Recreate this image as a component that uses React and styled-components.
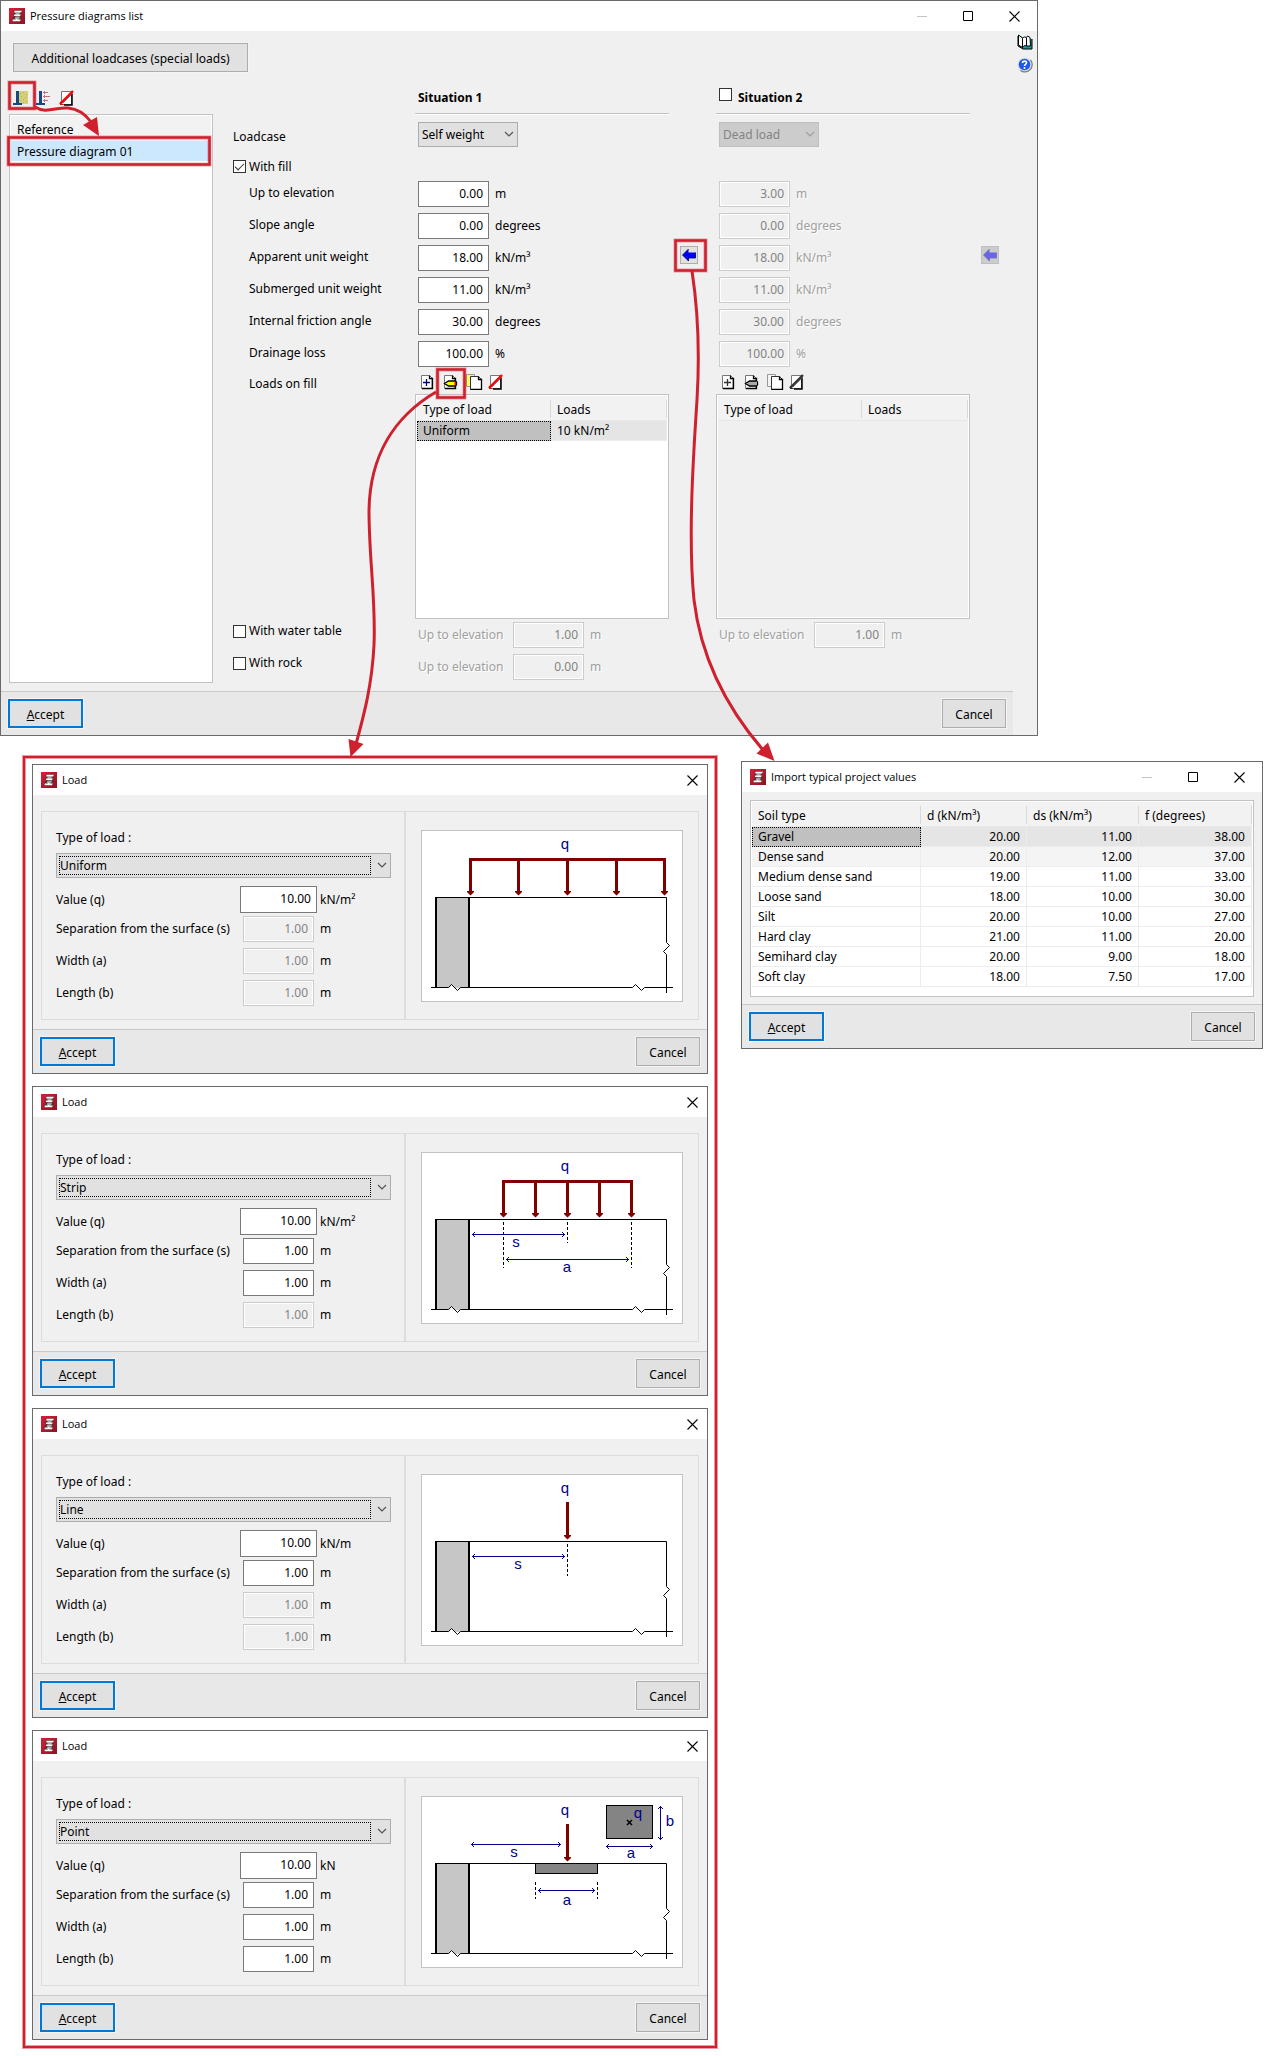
import React from "react";
import styled, { createGlobalStyle, css } from "styled-components";

const GlobalStyle = createGlobalStyle`
  *, *::before, *::after { box-sizing: border-box; }
  body {
    margin: 0;
    background: #ffffff;
    color: #000000;
    font-family: "Noto Sans", "Open Sans", sans-serif;
    font-size: 12px;
    line-height: 16px;
  }
  button, input, select { font: inherit; color: inherit; margin: 0; }
`;

const RED = "#cf202e";

/* ---------- page ---------- */

const Page = styled.main`
  position: relative;
  display: flex;
  flex-direction: column;
  gap: 20px;
  padding-bottom: 8px;
`;

const LowerRow = styled.div`
  display: flex;
  align-items: flex-start;
  gap: 24px;
  padding: 0 6px 0 23px;
`;

const LoadStack = styled.section`
  flex: 0 1 694px;
  display: flex;
  flex-direction: column;
  gap: 12px;
  padding: 6px 7px;
  border: 2px solid ${RED};
  box-shadow: 0 0 0 1px #ec9aa2, inset 0 0 0 1px #ec9aa2;
`;

const ImportSlot = styled.div`
  flex: 0 1 522px;
  padding-top: 5px;
`;

const Annotations = styled.svg`
  position: absolute;
  left: 0;
  top: 0;
  pointer-events: none;
  overflow: visible;
`;

/* ---------- window frame ---------- */

const Window = styled.section`
  display: flex;
  flex-direction: column;
  max-width: ${(p) => p.$max || "none"};
  border: 1px solid #6a6a6a;
  background: #f0f0f0;
`;

const TitleBar = styled.header`
  display: flex;
  align-items: center;
  gap: 5px;
  height: 30px;
  padding-left: 8px;
  background: #ffffff;
`;

const Title = styled.h1`
  flex: 1;
  margin: 0;
  font-family: "Open Sans", "Noto Sans", sans-serif;
  font-size: 11px;
  font-weight: 400;
`;

const ControlGroup = styled.div`
  display: flex;
`;

const WindowButton = styled.button`
  display: grid;
  place-items: center;
  width: ${(p) => (p.$narrow ? 30 : 46)}px;
  height: 28px;
  padding: 0;
  border: 0;
  background: none;
`;

const Footer = styled.footer`
  display: flex;
  justify-content: space-between;
  padding: 7px;
  border-top: 1px solid #c9c9c9;
  background: #e8e8e8;
`;

const Button = styled.button`
  min-width: ${(p) => p.$min || 64}px;
  height: 29px;
  padding: 2px 8px 0;
  border: 1px solid #adadad;
  background: #e1e1e1;
  box-shadow: 0 0 0 1px #f4f4f4;
  ${(p) =>
    p.$primary &&
    css`
      border: 2px solid #0078d7;
    `}
`;

/* ---------- form parts ---------- */

const Field = styled.input`
  width: ${(p) => (p.$wide ? 77 : 71)}px;
  height: ${(p) => (p.$wide ? 27 : 26)}px;
  padding: 0 5px 2px;
  border: 1px solid #7a7a7a;
  border-radius: 0;
  background: #ffffff;
  text-align: right;
  &:disabled {
    border-color: #cccccc;
    background: #f0f0f0;
    box-shadow: inset 0 0 0 1px #ffffff;
    color: #838383;
  }
`;

const SelectBox = styled.span`
  position: relative;
  display: block;
  width: ${(p) => p.$width};
  svg {
    position: absolute;
    right: 4px;
    top: 8px;
    pointer-events: none;
  }
  ${(p) =>
    p.$focused &&
    css`
      &::after {
        content: "";
        position: absolute;
        inset: 3px 20px 3px 3px;
        border: 1px dotted #000000;
        pointer-events: none;
      }
    `}
`;

const SelectControl = styled.select`
  appearance: none;
  display: block;
  width: 100%;
  height: 25px;
  padding: 1px 18px 0 3px;
  border: 1px solid #adadad;
  border-radius: 0;
  background: #e1e1e1;
  &:disabled {
    border-color: #bfbfbf;
    background: #cccccc;
    color: #838383;
    opacity: 1;
  }
`;

const Tick = styled.input`
  appearance: none;
  flex: none;
  display: grid;
  place-items: center;
  width: 13px;
  height: 13px;
  border: 1px solid #333333;
  background: #ffffff;
  &:checked::after {
    content: "";
    width: 9px;
    height: 5px;
    margin-top: -3px;
    border: solid #333333;
    border-width: 0 0 1px 1px;
    rotate: -45deg;
  }
`;

const Unit = styled.span`
  padding-left: 6px;
  ${(p) =>
    p.$off &&
    css`
      color: #a0a0a0;
      text-shadow: 1px 1px 0 #ffffff;
    `}
`;

const ElevationLabel = styled.label`
  width: 95px;
  color: #a0a0a0;
  text-shadow: 1px 1px 0 #ffffff;
`;

/* ---------- pressure diagrams window ---------- */

const Split = styled.div`
  display: grid;
  grid-template-columns: 1fr 24px;
`;

const Rail = styled.nav`
  display: flex;
  flex-direction: column;
  align-items: center;
  gap: 7px;
  padding-top: 3px;
`;

const IconButton = styled.button`
  display: grid;
  place-items: center;
  width: 16px;
  height: 16px;
  padding: 0;
  border: 0;
  background: none;
`;

const Content = styled.div`
  padding: 12px 0 8px 8px;
`;

const TopBar = styled.div`
  padding: 0 4px 10px;
`;

const Columns = styled.div`
  display: grid;
  grid-template-columns: 204px 202px 254px 47px 254px 1fr;
`;

const Column = styled.div`
  display: flex;
  flex-direction: column;
  padding-left: ${(p) => p.$indent || 0}px;
`;

const Row = styled.div`
  display: flex;
  align-items: center;
  flex: none;
  height: ${(p) => p.$h || 32}px;
  gap: ${(p) => p.$gap || 0}px;
  padding-left: ${(p) => p.$pad || 0}px;
  padding-top: ${(p) => p.$drop || 0}px;
  padding-bottom: ${(p) => p.$lift || 0}px;
`;

const SituationHead = styled(Row)`
  padding-left: 3px;
  border-bottom: 1px solid #c2c2c2;
  box-shadow: 0 1px 0 #ffffff;
  ${Tick} {
    align-self: flex-start;
    margin-top: 6px;
  }
`;

const SituationTitle = styled.h2`
  margin: 0;
  font-size: 12px;
  font-weight: 700;
`;

const Spacer = styled.div`
  flex: 1;
`;

const List = styled.ul`
  flex: 1;
  margin: 0;
  padding: 1px;
  list-style: none;
  border: 1px solid #c3c3c3;
  background: #ffffff;
`;

const ListItem = styled.li`
  height: ${(p) => (p.$head ? 25 : 20)}px;
  padding: ${(p) => (p.$head ? 6 : 3)}px 6px 0;
  background: ${(p) => (p.$head ? "#f2f2f2" : "#cce8ff")};
`;

const ArrowColumn = styled.div`
  padding: 164px 0 0 11px;
`;

const ArrowButton = styled.button`
  display: grid;
  place-items: center;
  width: 18px;
  height: 18px;
  padding: 0;
  border: 1px solid #adadad;
  background: #e1e1e1;
  &:disabled {
    border-color: #bfbfbf;
    background: #cccccc;
  }
`;

/* ---------- tables ---------- */

const TableBox = styled.div`
  flex: none;
  min-height: ${(p) => p.$h}px;
  padding: 1px;
  border: 1px solid #c3c3c3;
  background: ${(p) => (p.$off ? "#f0f0f0" : "#ffffff")};
  box-shadow: ${(p) => (p.$off ? "inset 0 0 0 1px #ffffff" : "none")};
`;

const Table = styled.table`
  width: 100%;
  table-layout: fixed;
  border-collapse: separate;
  border-spacing: 0;
`;

const HeadCell = styled.th`
  width: ${(p) => p.$w || "auto"};
  height: 25px;
  padding: 4px 0 2px;
  background: #f2f2f2;
  border-bottom: 1px solid #e8e8e8;
  font-weight: 400;
  text-align: left;
  span {
    display: block;
    padding: 2px 6px 0;
    border-right: 1px solid #d9d9d9;
  }
`;

const Cell = styled.td`
  height: 20px;
  padding: 0 6px;
  line-height: 18px;
  text-align: ${(p) => (p.$num ? "right" : "left")};
  border: solid #ececec;
  border-width: 0 1px 1px 0;
  background: ${(p) => p.$tone || "#ffffff"};
  ${(p) =>
    p.$picked &&
    css`
      padding: 0 6px 0 5px;
      border: 1px dotted #000000;
      background: #c0c0c0;
    `}
`;

/* ---------- load window ---------- */

const PanelArea = styled.div`
  padding: 16px 8px 9px;
`;

const Panels = styled.div`
  display: grid;
  grid-template-columns: 364px 1fr;
  border: 1px solid #dcdcdc;
`;

const FormPanel = styled.form`
  padding: 18px 13px 10px 14px;
  border-right: 2px solid #dcdcdc;
`;

const FormLabel = styled.label`
  display: block;
  padding-bottom: 7px;
`;

const FieldGrid = styled.div`
  display: grid;
  grid-template-columns: 184px 77px 1fr;
  grid-template-rows: 27px repeat(3, 32px);
  align-items: center;
  padding-top: 8px;
  ${Field} { justify-self: center; }
  ${Unit} { padding-left: 3px; }
`;

const DrawingPanel = styled.div`
  display: grid;
  place-items: center;
`;

const Drawing = styled.svg`
  display: block;
  border: 1px solid #c3c3c3;
  background: #ffffff;
  text {
    font-family: "Liberation Sans", sans-serif;
    font-size: 15px;
    fill: #00008b;
    text-anchor: middle;
  }
`;

const ImportBody = styled.div`
  padding: 8px 8px 7px;
`;

/* ---------- icons ---------- */

const AppIcon = () => (
  <svg width="16" height="16" viewBox="0 0 16 16" aria-hidden="true">
    <defs>
      <linearGradient id="appRed" x1="0" y1="0" x2="1" y2="1">
        <stop offset="0" stopColor="#d8203a" />
        <stop offset="1" stopColor="#8a1420" />
      </linearGradient>
    </defs>
    <rect width="16" height="16" fill="url(#appRed)" />
    <path d="M5 2.500h8.500l-1 3-1 1.500 1 1-1 5.500H3l1-3.500 1.500-2L4.500 6z" fill="#4d3034" />
    <path d="M6.500 4.500h4.500l-1 3H6.500zM6.500 8.500h4.500l-1 3H5.500z" fill="#a9a2a3" />
    <path d="M5.500 2.800h7.500l-1 1.700H5.200zM5.200 6.500h6.800l-1 1.500H5zM3.800 11.500h3l1-1 1 1h3l-.8 1.700H3.500z" fill="#ffffff" />
  </svg>
);

const Chevron = ({ color = "#555555" }) => (
  <svg width="10" height="8" viewBox="0 0 10 8" aria-hidden="true">
    <path d="M1 2l4 4 4-4" fill="none" stroke={color} strokeWidth="1.2" />
  </svg>
);

const MinimizeIcon = () => (
  <svg width="10" height="10" aria-hidden="true"><path d="M0 5.5h10" stroke="#c4c4c4" /></svg>
);
const MaximizeIcon = () => (
  <svg width="10" height="10" aria-hidden="true"><path d="M.5 .5h9v9h-9z" fill="none" stroke="#000" /></svg>
);
const CloseIcon = () => (
  <svg width="11" height="11" aria-hidden="true"><path d="M.5 .5l10 10M10.500 .5l-10 10" stroke="#000" strokeWidth="1.100" /></svg>
);

const WallFillIcon = () => (
  <svg width="16" height="16" shapeRendering="crispEdges" aria-hidden="true">
    <rect x="6" y="1" width="9" height="13" fill="#d6d078" />
    <path d="M3 1h3v12h3v2H0v-2h3z" fill="#134a86" />
    <path d="M7 3.500h1M10 2.500h1M13 4.500h1M8 6.500h1M12 7.500h1M10 9.500h1M7 10.500h1M13 11.500h1M10 12.500h1" stroke="#b5ad50" />
  </svg>
);
const WallPressureIcon = () => (
  <svg width="16" height="16" shapeRendering="crispEdges" aria-hidden="true">
    <path d="M3 1h3v12h3v2H0v-2h3z" fill="#134a86" />
    <path d="M7 2.500h5M8.500 1v3M7 6.500h7M8.500 5v3M7 10.500h5M8.500 9v3" stroke="#c2707c" />
  </svg>
);
const DeleteIcon = ({ color = "#ff0000" }) => (
  <svg width="16" height="16" aria-hidden="true">
    <path d="M2.500 1.500h10v13h-10z" fill="#fff" stroke="#777" />
    <path d="M13 4v11H5" fill="none" stroke="#000" strokeWidth="1.500" />
    <path d="M1 14L14 1" stroke={color} strokeWidth="2.400" />
    <path d="M4 13L14 3" stroke="#555" strokeWidth=".8" />
    <path d="M1 11.500v3.500h3.500z" fill={color} />
  </svg>
);
const PagePath = () => (
  <>
    <path d="M2.500 1.500h8l2.500 2.500v10.500h-10.500z" fill="#fff" stroke="#777" />
    <path d="M10.500 1.500v3h3v10h-10.500" fill="none" stroke="#000" strokeWidth="1.300" />
  </>
);
const AddIcon = ({ color = "#00008b" }) => (
  <svg width="16" height="16" aria-hidden="true">
    <PagePath />
    <path d="M4 8.500h7M7.500 5v7" stroke={color} strokeWidth="1.300" />
  </svg>
);
const EditIcon = ({ body = "#ffff00", tip = "#ff0000" }) => (
  <svg width="16" height="16" aria-hidden="true">
    <PagePath />
    <path d="M2.500 9.500l4-2.500h6.500l1.500 1v3l-1.500 1H6.500z" fill={body} stroke="#000" strokeWidth="1.300" />
    <path d="M12.500 7.800h1.500v3.400h-1.500z" fill={tip} />
  </svg>
);
const CopyIcon = ({ back = "#ffff60" }) => (
  <svg width="18" height="16" aria-hidden="true">
    <path d="M1.500 .5h8v12h-8z" fill={back} stroke="#999" />
    <path d="M5.500 2.500h8l3 3v10h-11z" fill="#fff" stroke="#333" />
    <path d="M13.500 2.500v3h3v10h-11" fill="none" stroke="#000" strokeWidth="1.300" />
  </svg>
);
const LeftArrowIcon = ({ off }) => (
  <svg width="16" height="14" aria-hidden="true">
    <path d="M1.500 7l6-6v3.500h7v5.500h-7v3z" fill={off ? "#6666e6" : "#0000ff"} />
    <path d="M7.500 1l-6 6 6 6v-3h7v-5.500" fill="none" stroke={off ? "#6c6cb0" : "#000050"} strokeWidth=".8" />
  </svg>
);
const BookIcon = () => (
  <svg width="16" height="16" aria-hidden="true">
    <path d="M1 2v10l5 3h9V5" fill="#1a9a98" stroke="#000" />
    <path d="M1.500 1l4 3v9.500l-4-2.500z" fill="#fff" stroke="#000" />
    <path d="M5.500 4.500c1.500-2 3-2 4-.5v8c-1-.8-2.500-.8-4 1.500z" fill="#fff" stroke="#000" />
    <path d="M9.500 3.500l1-1.500 2.500 1.500.5 8.500-4 0z" fill="#fff" stroke="#000" />
  </svg>
);
const HelpIcon = () => (
  <svg width="16" height="16" aria-hidden="true">
    <circle cx="8" cy="8" r="7.500" fill="#d8dde8" />
    <path d="M13.500 3a7.300 7.300 0 0 1-10 10.500" fill="none" stroke="#777d88" strokeWidth="1.200" />
    <circle cx="7.500" cy="7.500" r="5.800" fill="#1f5be8" />
    <path d="M5.500 6c0-2.500 4-2.500 4-.2 0 1.500-2 1.500-2 3.200" fill="none" stroke="#fff" strokeWidth="1.600" />
    <circle cx="7.500" cy="11" r="1" fill="#fff" />
  </svg>
);

/* ---------- load drawings ---------- */

const Soil = () => (
  <>
    <rect x="14" y="66" width="33" height="91" fill="#c6c6c6" />
    <path d="M27 157l3-3.500 3 3.500z" fill="#fff" />
    <path d="M14 66v90.500M47 66v90.500" stroke="#000" strokeWidth="2" />
    <path
      d="M13 66.500H244.500V111.500L247.500 114.500L241.500 120.500L244.500 123.500V162M9 156.500H26.500L29.500 153.500L35.500 159.500L38.500 156.500H210.500L213.500 153.500L219.500 159.500L222.500 156.500H251"
      fill="none"
      stroke="#000"
    />
  </>
);

const DownArrow = ({ x }) => (
  <path d={`M${x - 1.5} 27h3v33h2l0 1-3.500 3.500-3.500-3.500v-1h2z`} fill="#800000" />
);

const Beam = ({ xs }) => (
  <>
    <rect x={xs[0] - 1.5} y="27" width={xs[xs.length - 1] - xs[0] + 3} height="3" fill="#800000" />
    {xs.map((x) => <DownArrow key={x} x={x} />)}
  </>
);

const Dim = ({ x1, x2, y }) => (
  <path
    d={`M${x1} ${y}H${x2}M${x1 + 3} ${y - 2.5}L${x1 + 0.5} ${y}l2.500 2.500M${x2 - 3} ${y - 2.5}L${x2 - 0.5} ${y}l-2.500 2.500`}
    fill="none"
    stroke="#00008b"
  />
);

const Dash = ({ x, y1, y2 }) => (
  <path d={`M${x} ${y1}V${y2}`} stroke="#000" strokeDasharray="3 2" />
);

const drawings = {
  Uniform: (
    <>
      <text x="143" y="18">q</text>
      <Beam xs={[48.5, 96.5, 145.5, 194.5, 242.5]} />
    </>
  ),
  Strip: (
    <>
      <text x="143" y="18">q</text>
      <Beam xs={[81.5, 113.5, 145.5, 177.5, 209.5]} />
      <Dash x={81.5} y1={69} y2={115} />
      <Dash x={145.5} y1={69} y2={90} />
      <Dash x={209.5} y1={69} y2={115} />
      <Dim x1={50} x2={143} y={81.5} />
      <text x="94" y="94">s</text>
      <Dim x1={84} x2={207} y={106.5} />
      <text x="145" y="119">a</text>
    </>
  ),
  Line: (
    <>
      <text x="143" y="18">q</text>
      <DownArrow x={145.5} />
      <Dash x={145.5} y1={69} y2={101} />
      <Dim x1={50} x2={143} y={81.5} />
      <text x="96" y="94">s</text>
    </>
  ),
  Point: (
    <>
      <text x="143" y="18">q</text>
      <DownArrow x={145.5} />
      <Dim x1={49} x2={139} y={47.5} />
      <text x="92" y="60">s</text>
      <rect x="113.500" y="66.500" width="62" height="10" fill="#848484" stroke="#000" />
      <Dash x={113.5} y1={85} y2={102} />
      <Dash x={175.5} y1={85} y2={102} />
      <Dim x1={116} x2={173} y={93.5} />
      <text x="145" y="108">a</text>
      <rect x="184.500" y="8.500" width="46" height="33" fill="#848484" stroke="#000" />
      <path d="M205 23l5 5M210 23l-5 5" stroke="#000" strokeWidth="1.500" />
      <text x="216" y="21">q</text>
      <Dim x1={184} x2={231} y={49.5} />
      <text x="209" y="61">a</text>
      <path d="M238.500 9v34M236 12l2.500-2.500 2.500 2.500M236 40l2.500 2.500 2.500-2.500" fill="none" stroke="#00008b" />
      <text x="248" y="29">b</text>
    </>
  ),
};

/* ---------- composed pieces ---------- */

const Caption = ({ title, closeOnly }) => (
  <TitleBar>
    <AppIcon />
    <Title>{title}</Title>
    <ControlGroup>
      {!closeOnly && (
        <>
          <WindowButton type="button" aria-label="Minimize"><MinimizeIcon /></WindowButton>
          <WindowButton type="button" aria-label="Maximize"><MaximizeIcon /></WindowButton>
        </>
      )}
      <WindowButton type="button" aria-label="Close" $narrow={closeOnly}><CloseIcon /></WindowButton>
    </ControlGroup>
  </TitleBar>
);

const Actions = () => (
  <Footer>
    <Button type="button" $primary $min={75}><u>A</u>ccept</Button>
    <Button type="button">Cancel</Button>
  </Footer>
);

const Select = ({ id, value, width, disabled, focused, label }) => (
  <SelectBox $width={width} $focused={focused}>
    <SelectControl id={id} aria-label={label} defaultValue={value} disabled={disabled}>
      <option>{value}</option>
    </SelectControl>
    <Chevron color={disabled ? "#a0a0a0" : undefined} />
  </SelectBox>
);

const properties = [
  { id: "elevation", label: "Up to elevation", unit: "m", first: "0.00", second: "3.00" },
  { id: "slope", label: "Slope angle", unit: "degrees", first: "0.00", second: "0.00" },
  { id: "apparent", label: "Apparent unit weight", unit: "kN/m³", first: "18.00", second: "18.00" },
  { id: "submerged", label: "Submerged unit weight", unit: "kN/m³", first: "11.00", second: "11.00" },
  { id: "friction", label: "Internal friction angle", unit: "degrees", first: "30.00", second: "30.00" },
  { id: "drainage", label: "Drainage loss", unit: "%", first: "100.00", second: "100.00" },
];

function LoadsTable({ rows, off }) {
  return (
    <TableBox $h={225} $off={off}>
      <Table>
        <thead>
          <tr>
            <HeadCell $w={off ? "144px" : "134px"}><span>Type of load</span></HeadCell>
            <HeadCell><span>Loads</span></HeadCell>
          </tr>
        </thead>
        <tbody>
          {rows.map(([type, load]) => (
            <tr key={type}>
              <Cell $picked>{type}</Cell>
              <Cell $tone="#e5e5e5">{load}</Cell>
            </tr>
          ))}
        </tbody>
      </Table>
    </TableBox>
  );
}

function ElevationRow({ id, value }) {
  return (
    <Row $pad={3}>
      <ElevationLabel htmlFor={id}>Up to elevation</ElevationLabel>
      <Field id={id} defaultValue={value} disabled />
      <Unit $off>m</Unit>
    </Row>
  );
}

function Situation({ index, off, loadcase, rows, children }) {
  const dark = off ? "#333333" : undefined;
  const grey = off ? "#aaaaaa" : undefined;
  const key = off ? "second" : "first";
  return (
    <Column>
      {children}
      <Row $h={41} $pad={3}>
        <Select id={`loadcase-${index}`} label="Loadcase" value={loadcase} width="100px" disabled={off} />
      </Row>
      <Row $h={23} />
      {properties.map((p) => (
        <Row key={p.id} $pad={3}>
          <Field id={`${p.id}-${index}`} aria-label={p.label} defaultValue={p[key]} disabled={off} />
          <Unit $off={off}>{p.unit}</Unit>
        </Row>
      ))}
      <Row $h={24} $gap={7} $pad={4}>
        <IconButton type="button" aria-label="Add load"><AddIcon color={dark} /></IconButton>
        <IconButton type="button" aria-label="Edit load"><EditIcon body={grey} tip={grey} /></IconButton>
        <IconButton type="button" aria-label="Copy load"><CopyIcon back={off ? "#f4f4f4" : undefined} /></IconButton>
        <IconButton type="button" aria-label="Delete load"><DeleteIcon color={dark} /></IconButton>
      </Row>
      <LoadsTable rows={rows} off={off} />
      <ElevationRow id={`water-${index}`} value="1.00" />
      {!off && <ElevationRow id={`rock-${index}`} value="0.00" />}
    </Column>
  );
}

function PressureWindow() {
  return (
    <Window $max="1038px">
      <Caption title="Pressure diagrams list" />
      <Split>
        <div>
          <Content>
            <TopBar>
              <Button type="button" $min={235}>Additional loadcases (special loads)</Button>
            </TopBar>
            <Columns>
              <Column>
                <Row $gap={7} $pad={4}>
                  <IconButton type="button" aria-label="New fill diagram"><WallFillIcon /></IconButton>
                  <IconButton type="button" aria-label="New pressure diagram"><WallPressureIcon /></IconButton>
                  <IconButton type="button" aria-label="Delete diagram"><DeleteIcon /></IconButton>
                </Row>
                <List>
                  <ListItem $head>Reference</ListItem>
                  <ListItem>Pressure diagram 01</ListItem>
                </List>
              </Column>

              <Column $indent={20}>
                <Row />
                <Row $h={41} $drop={4}><label htmlFor="loadcase-1">Loadcase</label></Row>
                <Row $h={23} $gap={3}>
                  <Tick type="checkbox" id="fill" defaultChecked />
                  <label htmlFor="fill">With fill</label>
                </Row>
                {properties.map((p) => (
                  <Row key={p.id} $pad={16} $lift={2}><label htmlFor={`${p.id}-1`}>{p.label}</label></Row>
                ))}
                <Row $h={28} $pad={16}>Loads on fill</Row>
                <Spacer />
                <Row $gap={3} $lift={8}>
                  <Tick type="checkbox" id="water" />
                  <label htmlFor="water">With water table</label>
                </Row>
                <Row $gap={3} $lift={8}>
                  <Tick type="checkbox" id="rock" />
                  <label htmlFor="rock">With rock</label>
                </Row>
              </Column>

              <Situation index={1} loadcase="Self weight" rows={[["Uniform", "10 kN/m²"]]}>
                <SituationHead><SituationTitle>Situation 1</SituationTitle></SituationHead>
              </Situation>
              <ArrowColumn>
                <ArrowButton type="button" aria-label="Import typical values"><LeftArrowIcon /></ArrowButton>
              </ArrowColumn>
              <Situation index={2} loadcase="Dead load" rows={[]} off>
                <SituationHead $gap={6}>
                  <Tick type="checkbox" id="situation-2" />
                  <SituationTitle><label htmlFor="situation-2">Situation 2</label></SituationTitle>
                </SituationHead>
              </Situation>
              <ArrowColumn>
                <ArrowButton type="button" aria-label="Import typical values, situation 2" disabled><LeftArrowIcon off /></ArrowButton>
              </ArrowColumn>
            </Columns>
          </Content>
          <Actions />
        </div>
        <Rail>
          <IconButton type="button" aria-label="Manual"><BookIcon /></IconButton>
          <IconButton type="button" aria-label="Help"><HelpIcon /></IconButton>
        </Rail>
      </Split>
    </Window>
  );
}

const loads = [
  { type: "Uniform", unit: "kN/m²", active: 0 },
  { type: "Strip", unit: "kN/m²", active: 2 },
  { type: "Line", unit: "kN/m", active: 1 },
  { type: "Point", unit: "kN", active: 3 },
];

const dimensions = ["Separation from the surface (s)", "Width (a)", "Length (b)"];

function LoadWindow({ type, unit, active }) {
  return (
    <Window>
      <Caption title="Load" closeOnly />
      <PanelArea>
        <Panels>
          <FormPanel>
            <FormLabel htmlFor={`${type}-type`}>Type of load :</FormLabel>
            <Select id={`${type}-type`} value={type} width="100%" focused />
            <FieldGrid>
              <label htmlFor={`${type}-q`}>Value (q)</label>
              <Field id={`${type}-q`} defaultValue="10.00" $wide />
              <Unit>{unit}</Unit>
              {dimensions.map((name, i) => (
                <React.Fragment key={name}>
                  <label htmlFor={`${type}-${i}`}>{name}</label>
                  <Field id={`${type}-${i}`} defaultValue="1.00" disabled={i >= active} />
                  <Unit>m</Unit>
                </React.Fragment>
              ))}
            </FieldGrid>
          </FormPanel>
          <DrawingPanel>
            <Drawing width="262" height="172" viewBox="0 0 260 170" role="img" aria-label={`${type} load`}>
              <Soil />
              {drawings[type]}
            </Drawing>
          </DrawingPanel>
        </Panels>
      </PanelArea>
      <Actions />
    </Window>
  );
}

const soils = [
  ["Gravel", "20.00", "11.00", "38.00"],
  ["Dense sand", "20.00", "12.00", "37.00"],
  ["Medium dense sand", "19.00", "11.00", "33.00"],
  ["Loose sand", "18.00", "10.00", "30.00"],
  ["Silt", "20.00", "10.00", "27.00"],
  ["Hard clay", "21.00", "11.00", "20.00"],
  ["Semihard clay", "20.00", "9.00", "18.00"],
  ["Soft clay", "18.00", "7.50", "17.00"],
];
const rowTones = ["#e5e5e5", "#f4f4f4"];

function ImportWindow() {
  return (
    <Window>
      <Caption title="Import typical project values" />
      <ImportBody>
        <TableBox $h={197}>
          <Table>
            <thead>
              <tr>
                <HeadCell $w="169px"><span>Soil type</span></HeadCell>
                <HeadCell $w="106px"><span>d (kN/m³)</span></HeadCell>
                <HeadCell $w="112px"><span>ds (kN/m³)</span></HeadCell>
                <HeadCell><span>f (degrees)</span></HeadCell>
              </tr>
            </thead>
            <tbody>
              {soils.map(([name, ...values], r) => (
                <tr key={name}>
                  <Cell $picked={r === 0} $tone={rowTones[r]}>{name}</Cell>
                  {values.map((v, c) => (
                    <Cell key={c} $num $tone={rowTones[r]}>{v}</Cell>
                  ))}
                </tr>
              ))}
            </tbody>
          </Table>
        </TableBox>
      </ImportBody>
      <Actions />
    </Window>
  );
}

const marks = [
  [9.5, 82.5, 25, 26],
  [8.5, 137.5, 201, 27],
  [437.5, 369.5, 27, 28],
  [675.5, 240.5, 30, 30],
];

function Callouts() {
  return (
    <Annotations width="1038" height="770" aria-hidden="true">
      {marks.map(([x, y, w, h]) => (
        <g key={y} fill="none" stroke={RED}>
          <rect x={x} y={y} width={w} height={h} strokeWidth="4" strokeOpacity=".4" />
          <rect x={x} y={y} width={w} height={h} strokeWidth="2.500" />
        </g>
      ))}
      <g fill="none" stroke={RED} strokeWidth="3">
        <path d="M35 107C46 114 56 107 68 108C78 109 86 115 91 122" />
        <path d="M436 392C395 416 370 455 369 510C369 560 376 600 374 645C372 685 364 715 356 744" />
        <path d="M692 271C698 310 700 350 697 400C693 460 688 540 694 600C700 650 720 700 763 750" />
      </g>
      <g fill={RED}>
        <path d="M99 136L83 125L97 117z" />
        <path d="M350.500 757L348.500 739L363.500 744z" />
        <path d="M774.500 761L756.500 753.500L768 742.500z" />
      </g>
    </Annotations>
  );
}

export default function App() {
  return (
    <Page>
      <GlobalStyle />
      <PressureWindow />
      <LowerRow>
        <LoadStack>
          {loads.map((l) => <LoadWindow key={l.type} {...l} />)}
        </LoadStack>
        <ImportSlot>
          <ImportWindow />
        </ImportSlot>
      </LowerRow>
      <Callouts />
    </Page>
  );
}
